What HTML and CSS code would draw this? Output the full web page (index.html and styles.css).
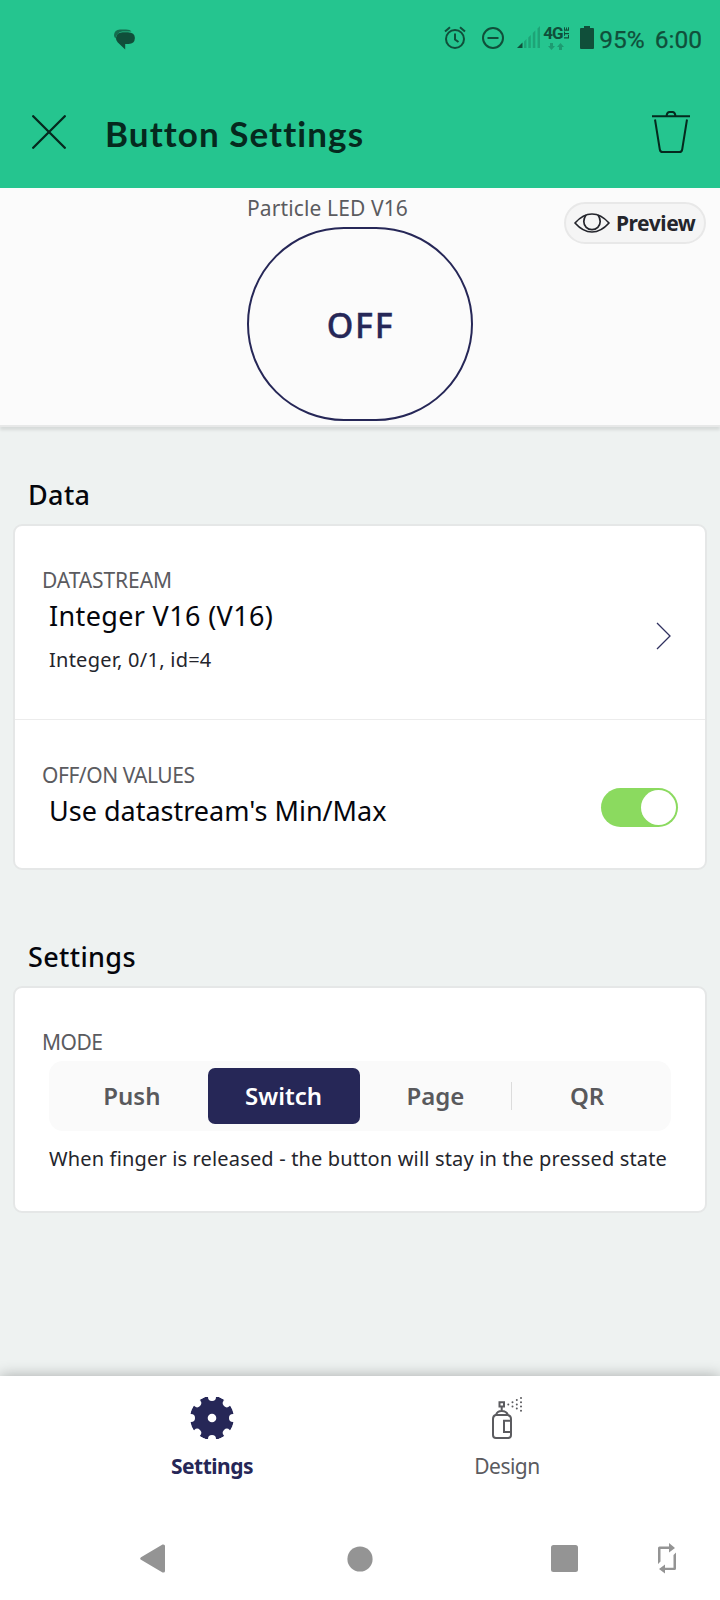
FILE: index.html
```html
<!DOCTYPE html>
<html lang="en">
<head>
<meta charset="utf-8">
<title>Button Settings</title>
<link rel="stylesheet" href="styles.css">
</head>
<body>
<div class="screen">
  <header class="header">
    <div class="status">
      <svg class="chat" width="22" height="22" viewBox="0 0 22 22"><path d="M6 0.4H12Q16.2 0.4 17.5 2.4H8.5Q3 2.6 1.6 9.5Q0 8 0 6Q.4.8 6 .4Z" opacity=".75"/><path d="M8.5 3.2H14Q20.7 3.4 20.9 9Q20.7 14.8 14.5 15H11.2V20.4L3.6 13.2Q1.8 11.5 2 9Q2.4 3.5 8.5 3.2Z"/></svg>
      <div class="status-right">
        <svg class="alarm" width="22" height="23" viewBox="0 0 22 23" fill="none" stroke="currentColor" stroke-width="2"><circle cx="11" cy="13" r="9"/><path d="M11 7.5V13.5L14.5 16M1 5.5L6 1.2M21 5.5L16 1.2"/></svg>
        <svg class="dnd" width="22" height="22" viewBox="0 0 22 22" fill="none" stroke="currentColor" stroke-width="2"><circle cx="11" cy="11" r="10"/><path d="M5.5 11H16.5"/></svg>
        <svg class="signal" width="23" height="22" viewBox="0 0 23 22"><path d="M0 22L5.5 16.5V22Z"/><path opacity=".28" d="M7 15.5L9.5 13V22H7ZM11.3 11.5L13.8 9V22H11.3ZM15.8 7L18.3 4.5V22H15.8ZM20.5 2.5L23 0V22H20.5Z"/></svg>
        <div class="network"><span class="g4">4G</span><span class="lte">LTE</span>
          <svg class="arrows" width="16" height="7" viewBox="0 0 16 7"><path d="M2 0H5V3H7L3.5 7L0 3H2ZM11 7H14V4H16L12.5 0L9 4H11Z"/></svg></div>
        <svg class="battery" width="14" height="23" viewBox="0 0 14 23"><path d="M4 0H10V2H13Q14 2 14 3V22Q14 23 13 23H1Q0 23 0 22V3Q0 2 1 2H4Z"/></svg>
        <span class="pct">95%</span><span class="clock">6:00</span>
      </div>
    </div>
    <div class="toolbar">
      <svg class="close" width="34" height="34" viewBox="0 0 34 34" fill="none" stroke="currentColor" stroke-width="2.3" stroke-linecap="round"><path d="M1.2 1.2L32.8 32.8M32.8 1.2L1.2 32.8"/></svg>
      <h1 class="title">Button Settings</h1>
      <svg class="trash" width="38" height="42" viewBox="0 0 38 42" fill="none" stroke="currentColor" stroke-width="2"><path d="M0 5.2H38M14.5 5Q15 1 17.5 1H20.5Q23 1 23.5 5M3 8.5L7.8 38.5Q8.2 41 10.5 41H27.5Q29.8 41 30.2 38.5L35 8.5"/></svg>
    </div>
  </header>

  <section class="preview">
    <div class="widget">
      <div class="widget-label">Particle LED V16</div>
      <div class="widget-button">OFF</div>
    </div>
    <div class="pill">
      <svg width="36" height="20" viewBox="0 0 36 20" fill="none" stroke="currentColor" stroke-width="1.7"><path d="M1 10Q9 1 18 1T35 10Q27 19 18 19T1 10Z" stroke-linejoin="round"/><path d="M12 1.9Q9.8 5 9.8 8.5A8.2 8.2 0 0 0 26.2 8.5Q26.2 5 24 1.9"/></svg>
      <span>Preview</span>
    </div>
  </section>

  <main class="content">
    <h2 class="section section-data">Data</h2>
    <div class="card">
      <div class="row row-stream">
        <div>
          <div class="cap">DATASTREAM</div>
          <div class="value value-stream">Integer V16 (V16)</div>
          <div class="note note-stream">Integer, 0/1, id=4</div>
        </div>
        <svg class="chevron" width="15" height="28" viewBox="0 0 15 28" fill="none" stroke="currentColor" stroke-width="1.3"><path d="M1 1L14 14L1 27"/></svg>
      </div>
      <div class="row row-values">
        <div>
          <div class="cap cap-values">OFF/ON VALUES</div>
          <div class="value">Use datastream's Min/Max</div>
        </div>
        <div class="toggle"><div class="knob"></div></div>
      </div>
    </div>
    <h2 class="section section-settings">Settings</h2>
    <div class="card card-mode">
      <div class="cap cap-mode">MODE</div>
      <div class="segments">
        <div class="seg">Push</div>
        <div class="seg active">Switch</div>
        <div class="seg">Page</div>
        <div class="seg seg-qr">QR</div>
      </div>
      <div class="note note-mode">When finger is released - the button will stay in the pressed state</div>
    </div>
  </main>

  <footer class="footer">
    <div class="tabs">
      <div class="tab selected">
        <svg width="44" height="42" viewBox="-22 -21 44 42"><defs><mask id="gear" maskUnits="userSpaceOnUse" x="-23" y="-23" width="46" height="46"><circle r="22" fill="#fff"/><g fill="#000"><circle r="4.3"/><circle cy="-21" r="4"/><circle cy="-21" r="4" transform="rotate(45)"/><circle cy="-21" r="4" transform="rotate(90)"/><circle cy="-21" r="4" transform="rotate(135)"/><circle cy="-21" r="4" transform="rotate(180)"/><circle cy="-21" r="4" transform="rotate(225)"/><circle cy="-21" r="4" transform="rotate(270)"/><circle cy="-21" r="4" transform="rotate(315)"/></g></mask></defs><circle r="22" fill="currentColor" mask="url(#gear)"/></svg>
        <span>Settings</span>
      </div>
      <div class="tab design">
        <svg width="32" height="42" viewBox="0 0 32 42" fill="none" stroke="currentColor" stroke-width="2"><path d="M7.5 5.2H12V9.5H7.5ZM9.7 10V14M4 18Q5 14 9.7 14T16 18M3.5 18H16Q19 19 19 22V38Q19 41 16 41H4Q1 41 1 38V22Q1 19 3.5 18ZM19 23.8H12V35H19"/><path stroke-linecap="round" d="M16.3 7.4h.01M20.5 5.2h.01M20.5 9.5h.01M24.8 3h.01M24.8 7.4h.01M24.8 11.6h.01M29 1.1h.01M29 5.2h.01M29 9.5h.01M29 13.8h.01"/></svg>
        <span>Design</span>
      </div>
    </div>
    <nav class="sysnav">
      <svg width="25" height="29" viewBox="0 0 25 29"><path d="M1 13.2L22.5.5Q25 0 25 2V27Q25 29 22.5 28.5L1 15.8Q-.6 14.5 1 13.2Z"/></svg>
      <svg class="home" width="26" height="26" viewBox="0 0 26 26"><circle cx="13" cy="13" r="12.6"/></svg>
      <svg class="recents" width="27" height="27" viewBox="0 0 27 27"><rect width="27" height="27" rx="2.5"/></svg>
      <svg class="rotate" width="18" height="31" viewBox="0 0 18 31"><path d="M0 21V5Q0 3.5 1.5 3.5H11V0L17 5L11 9.5V6H2.5V18.5ZM18 9.5V25.5Q18 27 16.5 27H7V30.5L1 26L7 21.5V24.8H15.5V12Z"/></svg>
    </nav>
  </footer>
</div>
</body>
</html>
```
FILE: styles.css
```css
body { margin: 0; background: #eef2f1; font-family: "Noto Sans", sans-serif; }
* { box-sizing: border-box; }
h1, h2 { margin: 0; }
svg { display: block; flex: none; fill: currentColor; }
svg[fill="none"] { fill: none; }
.screen { width: 720px; height: 1600px; display: flex; flex-direction: column; overflow: hidden; white-space: nowrap; }

.header { height: 188px; background: #25c58f; color: #05291e; }
.status { height: 76px; display: flex; justify-content: space-between; padding: 0 18px 0 114px; color: #104f3a; font-family: Roboto, sans-serif; }
.chat { margin-top: 29px; }
.status-right { display: flex; }
.alarm { margin: 26px 16px 0 0; }
.dnd { margin: 27px 13px 0 0; }
.signal { margin: 26px 3px 0 0; }
.network { display: grid; grid-template-columns: 20px 8px; width: 28px; height: 26px; margin: 25px 9px 0 0; }
.g4 { font-size: 17px; line-height: 16px; font-weight: 700; letter-spacing: -1px; }
.lte { width: 7px; height: 14px; font-size: 7.5px; line-height: 7px; font-weight: 900; letter-spacing: -.2px; writing-mode: vertical-rl; transform: rotate(180deg); }
.arrows { margin: 1px 0 0 5px; opacity: .35; }
.battery { margin: 26px 5px 0 0; }
.pct, .clock { font-size: 24.5px; line-height: 79px; font-weight: 400; -webkit-text-stroke: .25px currentColor; }
.clock { margin-left: 10px; }
.toolbar { display: flex; align-items: flex-start; padding: 0 30px 0 32px; }
.close { margin-top: 39px; }
.title { flex: 1; margin-left: 39px; font: 700 35px/60px Lato, sans-serif; letter-spacing: 1.08px; padding-top: 27px; }
.trash { margin-top: 35px; }

.preview { position: relative; height: 239px; background: #fbfbfb; border-bottom: 2px solid #e7e8e8; box-shadow: 0 3px 3px rgba(0,0,0,.1); }
.widget { width: 226px; margin: 0 auto; }
.widget-label { height: 39px; font-size: 21px; line-height: 41px; letter-spacing: .12px; color: #5b5b5f; }
.widget-button { height: 194px; border: 2px solid #262757; border-radius: 97px; color: #262757; font-weight: 500; font-size: 34px; line-height: 192px; letter-spacing: 1.7px; text-indent: 1px; text-align: center; -webkit-text-stroke: .4px currentColor; }
.pill { position: absolute; top: 14px; right: 14px; width: 142px; height: 42px; border: 2px solid #e8e8e8; border-radius: 21px; background: #f5f5f5; display: flex; align-items: center; gap: 6px; padding-left: 8px; color: #24252c; font-size: 21px; font-weight: 700; letter-spacing: -.45px; }

.content { flex: 1; padding: 0 13px; }
.section { padding-left: 15px; font-size: 27px; line-height: 42px; height: 40px; font-weight: 500; letter-spacing: .35px; color: #05060c; }
.section-data { margin: 47px 0 10px; }
.section-settings { margin: 66px 0 10px; }
.card { border: 2px solid #e5e7e7; border-radius: 9px; background: #fff; padding: 0 27px; height: 346px; }
.row { display: flex; justify-content: space-between; }
.row-stream { height: 194px; border-bottom: 1px solid #ececec; margin: 0 -27px; padding: 39px 34px 0 27px; }
.row-values { padding-top: 40px; }
.cap { font-size: 21px; line-height: 31px; height: 31px; letter-spacing: -.1px; color: #5b5b5f; }
.cap-values { letter-spacing: -.45px; }
.cap-mode { letter-spacing: -.5px; }
.value { padding-left: 7px; font-size: 27px; line-height: 40px; height: 40px; color: #05060c; }
.value-stream { letter-spacing: .35px; }
.note { padding-left: 7px; font-size: 20px; line-height: 44px; height: 44px; color: #24252c; }
.note-stream { line-height: 48px; letter-spacing: .25px; }
.note-mode { margin-top: 6px; letter-spacing: .16px; }
.chevron { margin-top: 57px; color: #30315f; }
.toggle { width: 77px; height: 39px; border-radius: 20px; background: #8bda5f; padding: 2px; margin-top: 28px; }
.knob { width: 35px; height: 35px; border-radius: 50%; background: #fff; margin-left: auto; }
.card-mode { height: 227px; padding-top: 39px; }
.segments { display: flex; height: 70px; margin: 3px 7px 0 7px; padding: 7px 8px 7px 7px; border-radius: 14px; background: #fafafa; }
.seg { flex: 1; font-size: 24px; line-height: 56px; font-weight: 600; text-align: center; color: #59595c; }
.active { background: #262757; border-radius: 7px; color: #fff; }
.seg-qr { position: relative; }
.seg-qr::before { content: ""; position: absolute; left: 0; top: 14px; width: 1px; height: 28px; background: #dcdcdc; }

.footer { height: 224px; background: #fff; box-shadow: 0 0 14px rgba(0,0,0,.3); display: flex; flex-direction: column; justify-content: space-between; }
.tabs { display: grid; grid-template-columns: 295px 295px; justify-content: center; padding: 21px 1px 0 0; }
.tab { display: flex; flex-direction: column; align-items: center; font-size: 21px; line-height: 30px; gap: 12px; color: #5b5b5f; letter-spacing: -.5px; }
.design svg { margin-left: 2px; }
.selected { color: #262757; font-weight: 700; letter-spacing: -.5px; }
.sysnav { display: flex; align-items: center; padding: 0 0 26px 140px; color: #949494; }
.home { margin-left: 182px; }
.recents { margin-left: 178px; }
.rotate { margin-left: 80px; }
```
